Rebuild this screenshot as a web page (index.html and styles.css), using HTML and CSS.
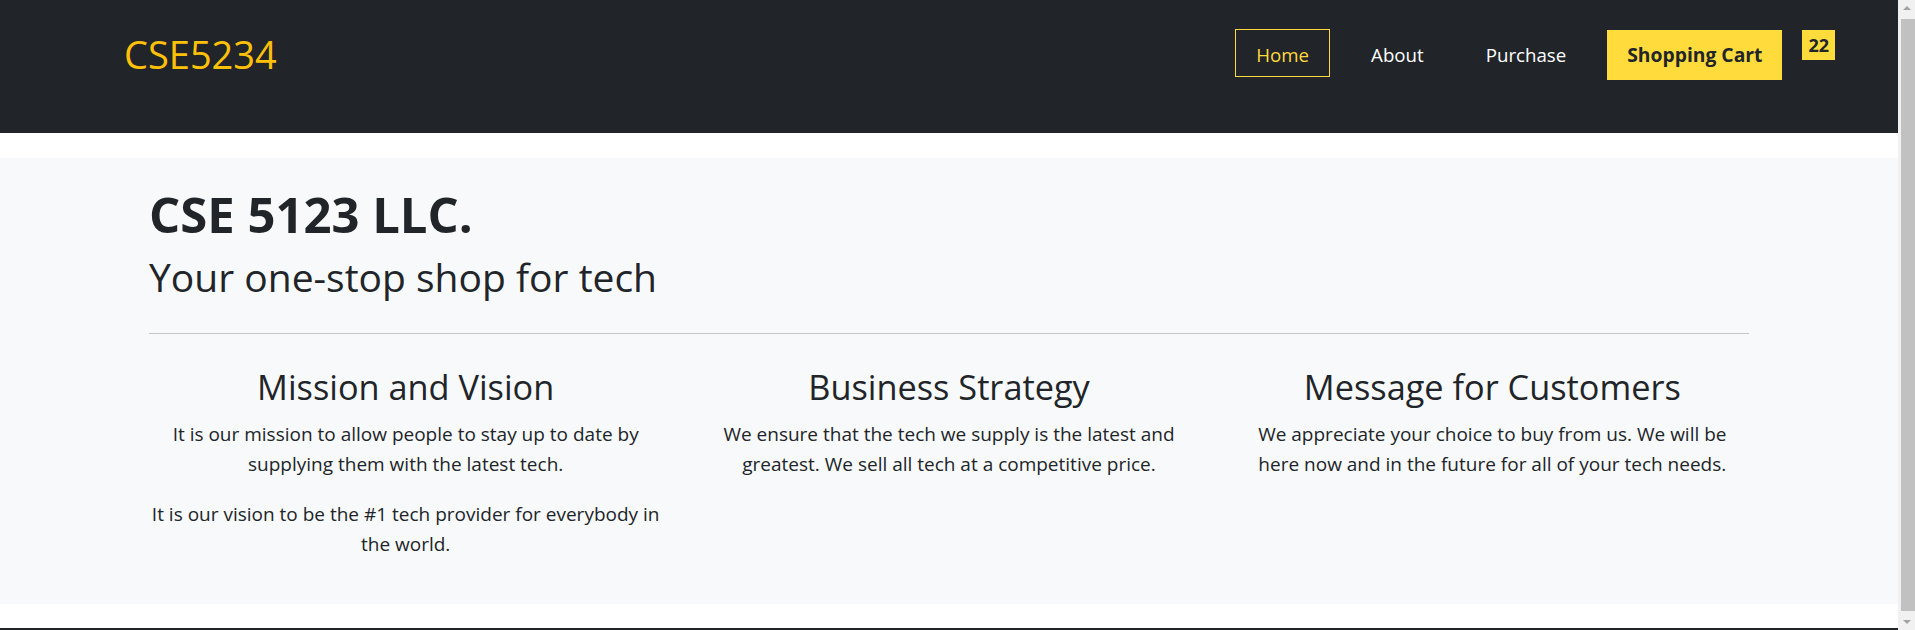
FILE: index.html
```html
<!DOCTYPE html>
<html lang="en">
<head>
<meta charset="utf-8">
<title>CSE5234</title>
<link rel="stylesheet" href="styles.css">
</head>
<body>
<div class="page">
  <nav class="navbar">
    <a class="brand" href="#">CSE5234</a>
    <ul class="nav">
      <li><a class="nav-link active" href="#">Home</a></li>
      <li><a class="nav-link" href="#">About</a></li>
      <li><a class="nav-link" href="#">Purchase</a></li>
      <li><a class="cart-btn" href="#">Shopping Cart</a></li>
      <li><span class="badge">22</span></li>
    </ul>
  </nav>

  <main class="hero">
    <div class="container">
      <h1 class="title">CSE 5123 LLC.</h1>
      <h2 class="subtitle">Your one-stop shop for tech</h2>
      <hr class="divider">
      <div class="row">
        <section class="col">
          <h3 class="col-title">Mission and Vision</h3>
          <p>It is our mission to allow people to stay up to date by supplying them with the latest tech.</p>
          <p>It is our vision to be the #1 tech provider for everybody in the world.</p>
        </section>
        <section class="col">
          <h3 class="col-title">Business Strategy</h3>
          <p>We ensure that the tech we supply is the latest and greatest. We sell all tech at a competitive price.</p>
        </section>
        <section class="col">
          <h3 class="col-title">Message for Customers</h3>
          <p>We appreciate your choice to buy from us. We will be here now and in the future for all of your tech needs.</p>
        </section>
      </div>
    </div>
  </main>

  <footer class="footer"></footer>
</div>

<div class="scrollbar">
  <div class="sb-arrow sb-up"></div>
  <div class="sb-track"><div class="sb-thumb"></div></div>
  <div class="sb-arrow sb-down"></div>
</div>
</body>
</html>
```

FILE: styles.css
```css
html, body {
  margin: 0;
  padding: 0;
  overflow: hidden;
  height: 100%;
}

body {
  font-family: "Segoe UI", "Open Sans", "Noto Sans", sans-serif;
  color: #212529;
  background: #ffffff;
}

.page {
  width: calc(100% - 17px);
}

/* ---------- navbar ---------- */
.navbar {
  background: #212529;
  height: 133px;
  box-sizing: border-box;
  padding: 29px 63px 0 124px;
  display: flex;
  align-items: flex-start;
}

.brand {
  color: #ffc107;
  text-decoration: none;
  font-size: 38px;
  line-height: 50px;
}

.nav {
  list-style: none;
  margin: 0 0 0 auto;
  padding: 0;
  display: flex;
  align-items: flex-start;
  gap: 20px;
}

.nav-link {
  display: block;
  color: #ffffff;
  text-decoration: none;
  font-size: 18.7px;
  line-height: 30px;
  padding: 10px 20px 6px;
  border: 1px solid transparent;
}

.nav-link.active {
  color: #ffd83d;
  border-color: #ffd83d;
}

.cart-btn {
  display: block;
  margin-top: 1px;
  background: #ffdc3c;
  color: #212529;
  font-weight: 700;
  font-size: 19.3px;
  line-height: 30px;
  padding: 10px 20px;
  text-decoration: none;
}

.badge {
  display: block;
  margin-top: 1px;
  background: #ffdc3c;
  color: #212529;
  font-weight: 700;
  font-size: 18px;
  line-height: 30px;
  padding: 0 6px;
}

/* ---------- hero ---------- */
.hero {
  background: #f8f9fa;
  margin: 25px 0 24px;
  padding: 27px 0 25px;
}

.container {
  max-width: 1600px;
  margin: 0 auto;
}

.title {
  font-size: 49px;
  font-weight: 700;
  line-height: 1.2;
  margin: 0 0 10px;
}

.subtitle {
  font-size: 39px;
  font-weight: 400;
  line-height: 1.2;
  margin: 0;
}

.divider {
  border: 0;
  border-top: 1px solid #c5c6c7;
  margin: 32px 0 32px;
}

.row {
  display: flex;
  margin: 0 -15px;
}

.col {
  flex: 1 1 0;
  padding: 0 15px;
  text-align: center;
}

.col-title {
  font-size: 34.3px;
  font-weight: 500;
  line-height: 1.2;
  margin: 0 0 12px;
}

.col p {
  font-size: 19px;
  line-height: 30px;
  margin: 0 0 20px;
}

/* ---------- footer ---------- */
.footer {
  background: #212529;
  height: 60px;
}

/* ---------- fake scrollbar ---------- */
.scrollbar {
  position: fixed;
  top: 0;
  right: 0;
  width: 17px;
  height: 100%;
  background: #f1f1f1;
  display: flex;
  flex-direction: column;
}

.sb-arrow {
  height: 17px;
  position: relative;
}

.sb-up::after,
.sb-down::after {
  content: "";
  position: absolute;
  left: 5px;
  width: 0;
  height: 0;
  border-left: 4px solid transparent;
  border-right: 4px solid transparent;
}

.sb-up::after {
  top: 6px;
  border-bottom: 4px solid #a3a3a3;
}

.sb-down::after {
  top: 7px;
  border-top: 4px solid #a3a3a3;
}

.sb-track {
  flex: 1;
  padding: 2px 0 2px 2px;
}

.sb-thumb {
  height: 100%;
  margin-left: 1px;
  background: #c1c1c1;
}
```
